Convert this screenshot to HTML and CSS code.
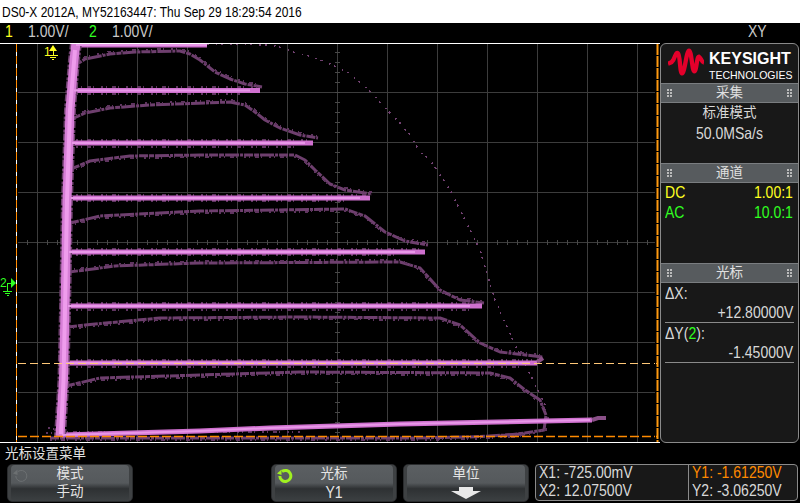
FILE: index.html
```html
<!DOCTYPE html>
<html lang="zh">
  <head>
    <meta charset="UTF-8" />
    <title>DSO-X 2012A</title>
    <link rel="stylesheet" href="styles.css">
  </head>
  <body>
    <div class="screen">
      <!-- top bars -->
      <div class="titlebar"><span class="nar">DS0-X 2012A, MY52163447: Thu Sep 29 18:29:54 2016</span></div>
      <div class="statusbar">
        <span class="ch1 chnum nar">1</span><span class="scale nar">1.00V/</span>
        <span class="ch2 chnum nar">2</span><span class="scale nar">1.00V/</span>
        <span class="mode nar">XY</span>
      </div>

      <div class="middle">
        <!-- graticule and traces, drawn in screen coordinates -->
        <svg class="scope" width="660" height="400" viewBox="0 43 660 400">
          <rect class="scope-bg" x="0" y="43" width="660" height="400" />
          <path class="grid" d="M37 44V442M87 44V442M137 44V442M187 44V442M237 44V442M287 44V442M337 44V442M387 44V442M437 44V442M487 44V442M537 44V442M587 44V442M637 44V442" />
          <path class="grid" d="M18 92H656M18 142H656M18 192H656M18 242H656M18 292H656M18 342H656M18 392H656" />
          <path class="tick" d="M337 52V442" />
          <path class="tick" d="M27 242H656" />

          <!-- dim traces -->
          <g class="dim">
            <path d="M74 66L85 59L110 54L135 52L180 51L190 54L200 60L215 72L230 79L245 84L262 87" />
            <path d="M72 119L85 113L110 108L150 105L230 102L245 105L255 112L265 120L280 128L300 135L318 138" />
            <path d="M71 169L90 161L130 156L200 155L295 155L305 160L315 170L330 184L345 190L372 194" />
            <path d="M70 223L100 216L200 211L345 209L365 216L385 232L405 241L428 245" />
            <path d="M69 272L85 270L115 266L200 263L400 262L420 268L440 290L460 300L484 303" />
            <path d="M68 327L85 325L160 318L300 317L440 318L460 325L480 343L500 352L543 357" />
            <path d="M66 386L100 378L300 372L490 373L510 378L525 390L540 400L546 415L544 430L525 433L500 436" />
            <path d="M50 438L410 438L470 437L525 434" />
          </g>
          <g class="dim-noise">
            <path d="M74 64L85 57L110 52L135 50L180 49L190 52L200 58L215 70L230 77L245 82L262 85" />
            <path d="M72 117L85 111L110 106L150 103L230 100L245 103L255 110L265 118L280 126L300 133L318 136" />
            <path d="M71 171L90 163L130 158L200 157L295 157L305 162L315 172L330 186L345 188L372 192" />
            <path d="M70 225L100 218L200 213L345 211L365 218L385 234L405 239L428 243" />
            <path d="M69 270L85 268L115 264L200 261L400 260L420 270L440 292L460 298L484 301" />
            <path d="M68 329L85 327L160 320L300 319L440 320L460 327L480 345L500 350L543 355" />
            <path d="M66 388L100 380L300 374L490 375L510 380L525 392L540 402L548 415L546 430L525 435L500 438" />
            <path d="M50 440L410 440L470 439L525 436" />
            <path d="M76 87H258M76 140H311M76 195H368M76 249H423M76 303H480M76 360H535" />
            <path d="M76 94H240M76 147H300M76 201H350M76 255H400M76 310H470M76 367H520" />
            <path d="M48 428L60 430M46 433L60 434M62 432H300" />
          </g>
          <path class="dots" d="M207 44L270 45L283 48L293 52L313 57L330 64L347 72L367 88L387 110L400 123L410 135L420 152L430 160L450 190L470 230L480 250L495 300L515 345L533 380L545 405" />

          <!-- bright traces -->
          <g class="bright">
            <path d="M76 45H207" />
            <path d="M74 90.5H260" />
            <path d="M72 143H313" />
            <path d="M71 198H370" />
            <path d="M69 252H425" />
            <path d="M68 306H482" />
            <path d="M66 363H537" />
            <path d="M62 435L200 431L270 428L400 424L592 420" />
          </g>
          <path class="tail" d="M592 420L598 418H606" />
          <path class="tail" d="M537 362L543 358" />
          <path class="column-fuzz" d="M76 43L74 60L70 110L67 200L65.5 285L63.5 380L60 436" />
          <path class="column" d="M76 43L74 60L70 110L67 200L65.5 285L63.5 380L60 436" />
          <g class="bright-core">
            <path d="M76 45H207M74 90.5H250M72 143H305M71 198H360M69 252H415M68 306H470M66 363H530M62 435L200 431L270 428L400 424L590 420" />
            <path class="core-col" d="M75 50L70 110L67 200L65.5 285L63.5 380L61 434" />
          </g>

          <!-- cursors -->
          <path class="cursor-y2" d="M18 363H657" />
          <path class="cursor-y1" d="M18 436.5H657" />
          <path class="edge" d="M0 43.5H660M0 442.5H660" />
          <path class="cursor-x1-bg" d="M16.5 44V442" />
          <path class="cursor-x1" d="M16.5 44V442" />
          <path class="cursor-x2-bg" d="M655.5 44V442" />
          <path class="cursor-x2" d="M657.5 44V442" />

          <!-- ground markers -->
          <text class="mark1" x="44" y="55.5">1</text>
          <path class="mark1-shape" d="M49 51L53 45L57 51Z" />
          <path class="mark1-line" d="M53 50V55M48 55.5H58M50 57.5H56M52 59.5H54" />
          <text class="mark2" x="0" y="287">2</text>
          <path class="mark2-shape" d="M11 278L16 283L11 288Z" />
          <path class="mark2-line" d="M11 283H7V291M3 291.5H12M5 293.5H10M6.5 295.5H8.5" />
        </svg>

        <!-- right side panel -->
        <aside class="panel">
          <div class="logo">
            <svg class="logo-wave" width="36" height="30" viewBox="0 0 108 90">
              <path d="M0 47C8 44 12 44 16 36C22 22 25 12 30 16C37 22 35 74 42 76C50 78 55 8 63 8C71 8 72 70 79 70C86 70 86 24 93 26C98 28 100 42 108 44" />
            </svg>
            <div class="logo-text">
              <div class="logo-main">KEYSIGHT</div>
              <div class="logo-sub">TECHNOLOGIES</div>
            </div>
          </div>

          <div class="head"><i></i><span>采集</span><i></i></div>
          <div class="sect sect-acq">
            <div class="center cjk">标准模式</div>
            <div class="center nar-c">50.0MSa/s</div>
          </div>

          <div class="head"><i></i><span>通道</span><i></i></div>
          <div class="sect sect-ch">
            <div class="row ch1"><span class="nar">DC</span><span class="nar-r">1.00:1</span></div>
            <div class="row ch2"><span class="nar">AC</span><span class="nar-r">10.0:1</span></div>
          </div>

          <div class="head"><i></i><span>光标</span><i></i></div>
          <div class="sect sect-cursor">
            <div class="cur-label"><span class="nar">ΔX:</span></div>
            <div class="cur-value"><span class="nar-r">+12.80000V</span></div>
            <div class="cur-label"><span class="nar">ΔY(<span class="ch2">2</span>):</span></div>
            <div class="cur-value"><span class="nar-r">-1.45000V</span></div>
          </div>
        </aside>
      </div>

      <!-- bottom softkeys -->
      <div class="menu-title">光标设置菜单</div>
      <div class="softkeys">
        <div class="key">
          <svg class="knob" width="16" height="16" viewBox="0 0 16 16">
            <path class="knob-off" d="M5 3.5A5.5 5.5 0 1 1 2.8 8" />
            <path class="knob-off-tip" d="M0 5.5L4.5 1.5V7Z" />
          </svg>
          <div>模式</div><div>手动</div>
        </div>
        <div class="key key-empty"></div>
        <div class="key">
          <svg class="knob" width="16" height="16" viewBox="0 0 16 16">
            <path class="knob-on" d="M5 3.5A5.5 5.5 0 1 1 2.8 8" />
            <path class="knob-on-tip" d="M0 5.5L4.5 1.5V7Z" />
          </svg>
          <div>光标</div><div class="key-num">Y1</div>
        </div>
        <div class="key">
          <div>单位</div>
          <svg class="arrow" width="30" height="12" viewBox="0 0 30 12"><path d="M8 0H22V4H30L15 12L0 4H8Z" /></svg>
        </div>
        <div class="readout">
          <div class="read-col">
            <div class="read-row"><span class="nar">X1: -725.00mV</span></div>
            <div class="read-row"><span class="nar">X2: 12.07500V</span></div>
          </div>
          <div class="read-col">
            <div class="read-row y1"><span class="nar">Y1: -1.61250V</span></div>
            <div class="read-row"><span class="nar">Y2: -3.06250V</span></div>
          </div>
        </div>
      </div>
    </div>
  </body>
</html>
```

FILE: styles.css
```css
* {
  margin: 0;
  padding: 0;
  box-sizing: border-box;
}
body {
  background: #000;
  overflow: hidden;
}
.screen {
  width: 800px;
  height: 503px;
  background: #000;
  color: #d8d8d8;
  font: 16.5px/1 'Liberation Sans', 'Noto Sans CJK SC', sans-serif;
  display: flex;
  flex-direction: column;
}
.ch1 {
  color: #ffff20;
}
.ch2 {
  color: #30ff20;
}

/* the instrument font is tall and narrow */
.nar,
.nar-r,
.nar-c {
  display: inline-block;
  transform: scaleX(0.85);
  transform-origin: left center;
  white-space: nowrap;
}
.nar-r {
  transform-origin: right center;
}
.nar-c {
  display: block;
  transform-origin: center;
}

/* top bars */
.titlebar {
  height: 23px;
  line-height: 24px;
  padding-left: 2px;
  background: #fff;
  color: #000;
  font-size: 14.8px;
  white-space: nowrap;
}
.titlebar .nar {
  transform: scaleX(0.81);
}
.statusbar {
  height: 20px;
  line-height: 16px;
  padding-left: 5px;
  display: flex;
}
.chnum {
  width: 23px;
}
.scale {
  width: 61px;
  color: #c8c8c8;
}
.mode {
  margin-left: 575px;
  color: #c8c8c8;
}

/* scope */
.middle {
  height: 400px;
  display: flex;
}
.scope {
  display: block;
  flex: none;
}
.scope-bg {
  fill: #000;
}
.scope path {
  fill: none;
}
.grid {
  stroke: #3c3c3c;
  stroke-width: 1;
  shape-rendering: crispEdges;
}
.tick {
  stroke: #484848;
  stroke-width: 5;
  stroke-dasharray: 1 9;
  shape-rendering: crispEdges;
}
.dim path {
  stroke: #6e3f6e;
  stroke-width: 3;
  stroke-linejoin: round;
  stroke-dasharray: 9 1 5 1 14 1 3 1;
}
.dim-noise path {
  stroke: #5e355f;
  stroke-width: 2;
  stroke-dasharray: 2 3 1 5 4 2 1 7;
  shape-rendering: crispEdges;
}
.dots {
  stroke: #70406f;
  stroke-width: 1.5;
  stroke-dasharray: 2 7 1.5 4;
  shape-rendering: crispEdges;
}
.bright path {
  stroke: #cf70cf;
  stroke-width: 5;
}
.tail {
  stroke: #8a5088;
  stroke-width: 4;
}
.column-fuzz {
  stroke: #6e3f6e;
  stroke-width: 12;
  stroke-dasharray: 7 2 3 1;
}
.column {
  stroke: #d67ed6;
  stroke-width: 9;
}
.bright-core path {
  stroke: #e898e8;
  stroke-width: 2;
}
.bright-core .core-col {
  stroke: #ee9cec;
  stroke-width: 4;
}
.cursor-y2 {
  stroke: #ffc878;
  stroke-width: 1;
  stroke-dasharray: 8 4;
  shape-rendering: crispEdges;
}
.cursor-y1 {
  stroke: #ff8a00;
  stroke-width: 1.5;
  stroke-dasharray: 9 3;
}
.edge {
  stroke: #fff;
  stroke-width: 1;
  shape-rendering: crispEdges;
}
.cursor-x1-bg {
  stroke: #fff;
  stroke-width: 1;
}
.cursor-x1 {
  stroke: #ff8a00;
  stroke-width: 1;
  stroke-dasharray: 8 4;
}
.cursor-x2-bg {
  stroke: #000;
}
.cursor-x2 {
  stroke: #ff9a10;
  stroke-width: 2;
  stroke-dasharray: 11 1;
}
.mark1,
.mark2 {
  font-size: 12px;
}
.mark1 {
  fill: #ffff20;
}
.mark2 {
  fill: #30ff20;
}
.scope .mark1-shape {
  fill: #ffff20;
}
.mark1-line {
  stroke: #ffff20;
  stroke-width: 1;
  shape-rendering: crispEdges;
}
.scope .mark2-shape {
  fill: #30ff20;
}
.mark2-line {
  stroke: #30ff20;
  stroke-width: 1;
  shape-rendering: crispEdges;
}

/* side panel */
.panel {
  width: 139px;
  height: 400px;
  flex: none;
  background: #181818;
  border: 1px solid #8a8a8a;
  border-radius: 6px;
  display: flex;
  flex-direction: column;
}
.logo {
  height: 39px;
  flex: none;
  padding: 4px 0 0 7px;
  display: flex;
  gap: 5px;
}
.logo-wave {
  flex: none;
}
.logo-wave path {
  fill: none;
  stroke: #e4002b;
  stroke-width: 13;
}
.logo-text {
  color: #fff;
}
.logo-main {
  font-size: 16px;
  font-weight: bold;
  margin-top: 3px;
}
.logo-sub {
  font-size: 10.5px;
  margin-top: 3px;
}
.head {
  height: 20px;
  flex: none;
  padding: 0 6px;
  background: #575b5e;
  border-top: 1px solid #7a7d80;
  border-bottom: 1px solid #7a7d80;
  color: #e0e0e0;
  font-size: 13.5px;
  display: flex;
  align-items: center;
  justify-content: space-between;
}
.head i {
  width: 5px;
  height: 9px;
  background: radial-gradient(circle at 1px 1px, #bbb 1px, transparent 1px) 0 0 / 3px 3px;
}
.sect {
  flex: none;
}
.sect-acq {
  height: 60px;
}
.center {
  height: 20px;
  line-height: 20px;
  text-align: center;
}
.cjk {
  font-size: 13.5px;
}
.sect-ch {
  height: 80px;
  padding: 0 5px 0 4px;
}
.row {
  height: 20px;
  line-height: 19px;
  display: flex;
  justify-content: space-between;
}
.sect-cursor {
  padding: 0 4px;
}
.cur-label {
  height: 20px;
  line-height: 20px;
}
.cur-value {
  height: 20px;
  line-height: 18px;
  text-align: right;
  padding-right: 1px;
  border-bottom: 1px solid #8a8a8a;
}

/* bottom */
.menu-title {
  height: 21px;
  padding: 3px 0 0 5px;
  font-size: 13.5px;
  line-height: 15px;
  color: #e0e0e0;
}
.softkeys {
  height: 39px;
  padding-left: 7px;
  display: flex;
  gap: 6px;
}
.key {
  position: relative;
  width: 126px;
  height: 38px;
  border: 1px solid #2a2c2e;
  border-radius: 5px;
  background: linear-gradient(#5b5f62, #55595c 50%, #2e3133 66%, #3c4042);
  box-shadow: inset 3px 0 0 #3e4143, inset -3px 0 0 #3e4143;
  color: #e4e4e4;
  font-size: 13.5px;
  text-align: center;
  line-height: 18px;
}
.key-num {
  font-size: 16.5px;
  transform: scaleX(0.85);
}
.key-empty {
  visibility: hidden;
}
.knob {
  position: absolute;
  left: 5px;
  top: 3px;
}
.knob path {
  fill: none;
}
.knob-off {
  stroke: #6c7072;
  stroke-width: 1;
}
.knob .knob-off-tip {
  fill: #6c7072;
}
.knob-on {
  stroke: #a0f020;
  stroke-width: 3;
}
.knob .knob-on-tip {
  fill: #a0f020;
}
.arrow {
  display: block;
  margin: 4px auto 0;
}
.arrow path {
  fill: #e8e8e8;
}
.readout {
  width: 263px;
  height: 37px;
  display: flex;
  border: 1px solid #8a8a8a;
  border-radius: 4px;
  background: #181818;
}
.read-col {
  padding-left: 3px;
  white-space: nowrap;
}
.read-row {
  height: 18px;
  line-height: 15px;
}
.read-col:first-child {
  width: 156px;
  border-right: 1px solid #8a8a8a;
}
.y1 {
  color: #ff8a00;
}
```
